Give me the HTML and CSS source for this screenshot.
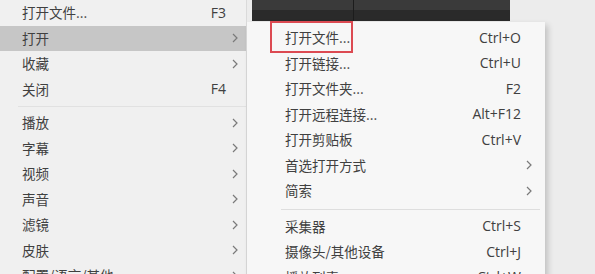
FILE: index.html
```html
<!DOCTYPE html>
<html lang="zh-CN">
<head>
<meta charset="utf-8">
<link rel="stylesheet" href="styles.css">
</head>
<body>
<div class="screen">
  <div class="menu main">
    <div class="item"><span class="label">打开文件...</span><span class="key">F3</span></div>
    <div class="item active"><span class="label">打开</span><svg class="chev" viewBox="0 0 6 10"><path d="M1 1l4 4-4 4"/></svg></div>
    <div class="item"><span class="label">收藏</span><svg class="chev" viewBox="0 0 6 10"><path d="M1 1l4 4-4 4"/></svg></div>
    <div class="item"><span class="label">关闭</span><span class="key">F4</span></div>
    <div class="sep"></div>
    <div class="item"><span class="label">播放</span><svg class="chev" viewBox="0 0 6 10"><path d="M1 1l4 4-4 4"/></svg></div>
    <div class="item"><span class="label">字幕</span><svg class="chev" viewBox="0 0 6 10"><path d="M1 1l4 4-4 4"/></svg></div>
    <div class="item"><span class="label">视频</span><svg class="chev" viewBox="0 0 6 10"><path d="M1 1l4 4-4 4"/></svg></div>
    <div class="item"><span class="label">声音</span><svg class="chev" viewBox="0 0 6 10"><path d="M1 1l4 4-4 4"/></svg></div>
    <div class="item"><span class="label">滤镜</span><svg class="chev" viewBox="0 0 6 10"><path d="M1 1l4 4-4 4"/></svg></div>
    <div class="item"><span class="label">皮肤</span><svg class="chev" viewBox="0 0 6 10"><path d="M1 1l4 4-4 4"/></svg></div>
    <div class="item"><span class="label">配置/语言/其他</span><svg class="chev" viewBox="0 0 6 10"><path d="M1 1l4 4-4 4"/></svg></div>
  </div>
  <div class="desk">
    <div class="darkbar"><div class="pane a"></div><div class="pane b"></div></div>
    <div class="menu sub">
      <div class="item"><span class="label">打开文件...</span><span class="key">Ctrl+O</span></div>
      <div class="item"><span class="label">打开链接...</span><span class="key">Ctrl+U</span></div>
      <div class="item"><span class="label">打开文件夹...</span><span class="key">F2</span></div>
      <div class="item"><span class="label">打开远程连接...</span><span class="key">Alt+F12</span></div>
      <div class="item"><span class="label">打开剪贴板</span><span class="key">Ctrl+V</span></div>
      <div class="item"><span class="label">首选打开方式</span><svg class="chev" viewBox="0 0 6 10"><path d="M1 1l4 4-4 4"/></svg></div>
      <div class="item"><span class="label">简索</span><svg class="chev" viewBox="0 0 6 10"><path d="M1 1l4 4-4 4"/></svg></div>
      <div class="sep"></div>
      <div class="item"><span class="label">采集器</span><span class="key">Ctrl+S</span></div>
      <div class="item"><span class="label">摄像头/其他设备</span><span class="key">Ctrl+J</span></div>
      <div class="item"><span class="label">播放列表</span><span class="key">Ctrl+W</span></div>
    </div>
    <div class="highlight-box"></div>
  </div>
</div>
</body>
</html>
```

FILE: styles.css
```css
html, body {
  margin: 0;
  padding: 0;
  background: #ececec;
}
.screen {
  width: 595px;
  height: 274px;
  overflow: hidden;
  display: flex;
  font-family: "Noto Sans CJK SC", "Noto Sans", sans-serif;
  font-size: 13.5px;
  color: #404040;
}
.menu {
  display: flex;
  flex-direction: column;
}
.main {
  width: 246px;
  flex: none;
  background: #f0f0f0;
  border-right: 1px solid #dadada;
}
.item {
  height: 25.5px;
  flex: none;
  display: flex;
  align-items: center;
  line-height: 1;
}
.main .item {
  padding: 0 8px 0 22px;
}
.main .item.active {
  background: #c6c6c6;
}
.label {
  flex: 1;
  white-space: nowrap;
}
.key {
  font-family: "Open Sans", "Noto Sans", sans-serif;
  font-size: 14px;
  color: #404040;
}
.main .key {
  margin-right: 12px;
}
.chev {
  width: 6px;
  height: 10px;
  fill: none;
  stroke: #7a7a7a;
  stroke-width: 1.2;
}
.main .sep {
  height: 8px;
  flex: none;
  margin-left: 18px;
  background: linear-gradient(#e1e1e1, #e1e1e1) no-repeat 0 4px / 100% 1px;
}
.desk {
  position: relative;
  flex: 1;
}
.darkbar {
  margin-left: 5px;
  width: 258px;
  height: 21px;
  display: flex;
  background: linear-gradient(#3a3a3a 0, #3a3a3a 10px, #2a2a2a 10px);
}
.pane.a {
  width: 101px;
  border-right: 1px solid #1c1c1c;
}
.sub {
  position: absolute;
  top: 22px;
  left: 0;
  width: 298px;
  padding-top: 3px;
  background: #f7f7f7;
  box-shadow: 3px 3px 6px rgba(0, 0, 0, 0.18);
}
.sub .item {
  padding: 0 24px 0 38px;
}
.sub .chev {
  margin-right: -11px;
}
.sub .sep {
  height: 10px;
  flex: none;
  margin: 0 5px 0 34px;
  background: linear-gradient(#dedede, #dedede) no-repeat 0 5px / 100% 1px;
}
.highlight-box {
  position: absolute;
  left: 23px;
  top: 21px;
  width: 79px;
  height: 28px;
  border: 2px solid #dc4a52;
}
```
